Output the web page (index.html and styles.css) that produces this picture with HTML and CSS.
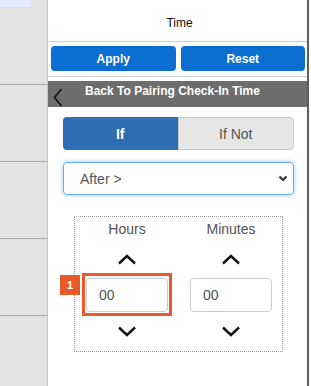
FILE: index.html
```html
<!DOCTYPE html>
<html>
<head>
<meta charset="utf-8">
<link rel="stylesheet" href="styles.css">
</head>
<body>
<div class="page">
  <div class="side">
    <div class="side-row first"><div class="side-tag"></div></div>
    <div class="side-row"></div>
    <div class="side-row"></div>
    <div class="side-row"></div>
    <div class="side-row last"></div>
  </div>
  <div class="main">
    <div class="header">Time</div>
    <div class="actions">
      <button class="btn">Apply</button>
      <button class="btn">Reset</button>
    </div>
    <div class="backbar">
      <svg class="back-icon" width="10" height="19" viewBox="0 0 10 19"><polyline points="8.5,1 1.5,9.5 8.5,18" fill="none" stroke="#111" stroke-width="1.6"/></svg>
      <span class="back-text">Back To Pairing Check-In Time</span>
    </div>
    <div class="toggle">
      <div class="tg tg-on">If</div>
      <div class="tg tg-off">If Not</div>
    </div>
    <div class="select">
      <span>After &gt;</span>
      <svg width="10" height="7" viewBox="0 0 10 7"><polyline points="1.5,1.5 5,5 8.5,1.5" fill="none" stroke="#333" stroke-width="2.2"/></svg>
    </div>
    <div class="picker">
      <div class="col">
        <div class="lbl">Hours</div>
        <svg class="chev" width="20" height="11" viewBox="0 0 20 11"><polyline points="2,9.5 10,2 18,9.5" fill="none" stroke="#111" stroke-width="2.4"/></svg>
        <div class="field-wrap">
          <div class="field">00</div>
          <div class="hl"></div>
          <div class="badge">1</div>
        </div>
        <svg class="chev" width="20" height="11" viewBox="0 0 20 11"><polyline points="2,1.5 10,9 18,1.5" fill="none" stroke="#111" stroke-width="2.4"/></svg>
      </div>
      <div class="col">
        <div class="lbl">Minutes</div>
        <svg class="chev" width="20" height="11" viewBox="0 0 20 11"><polyline points="2,9.5 10,2 18,9.5" fill="none" stroke="#111" stroke-width="2.4"/></svg>
        <div class="field-wrap">
          <div class="field">00</div>
        </div>
        <svg class="chev" width="20" height="11" viewBox="0 0 20 11"><polyline points="2,1.5 10,9 18,1.5" fill="none" stroke="#111" stroke-width="2.4"/></svg>
      </div>
    </div>
  </div>
  <div class="edge"></div>
</div>
</body>
</html>
```
FILE: styles.css
```css
* { box-sizing: border-box; }
html, body { margin: 0; padding: 0; background: #fff; }
body { font-family: "Liberation Sans", Arial, sans-serif; }
.page { display: flex; width: 311px; height: 386px; overflow: hidden; }

.side { width: 48px; flex: none; background: #e3e3e3; border-right: 1px solid #c4c4c4; display: flex; flex-direction: column; }
.side-row { height: 77px; border-bottom: 1px solid #a8a8a8; flex: none; }
.side-row.first { height: 85px; }
.side-row.last { flex: 1; border-bottom: none; }
.side-tag { width: 31px; height: 7px; background: #e6ecff; }

.main { width: 259px; flex: none; display: flex; flex-direction: column; }
.edge { width: 2px; flex: none; background: #5e5e5e; margin-right: 2px; }

.header { height: 42px; border-bottom: 1px solid #cfcfcf; display: flex; align-items: center; justify-content: center; font-size: 12px; color: #111; padding-left: 4px; padding-top: 5px; }

.actions { display: flex; gap: 5px; padding: 4px 2px 5px 3px; border-bottom: 1px solid #cfcfcf; }
.btn { flex: 1; height: 25px; border: none; border-radius: 4px; background: #0b6fd2; color: #fff; font-family: "Liberation Sans", Arial, sans-serif; font-weight: bold; font-size: 12px; padding: 0; }

.backbar { margin-top: 4px; height: 26px; background: #6d6d6d; display: flex; align-items: flex-start; position: relative; }
.back-icon { margin: 7px 0 0 5px; flex: none; }
.back-text { color: #fff; font-weight: bold; font-size: 12px; margin: 3px 0 0 22px; white-space: nowrap; }

.toggle { display: flex; margin: 10px 13px 0 15px; height: 33px; }
.tg { flex: 1; display: flex; align-items: center; justify-content: center; font-size: 14px; }
.tg-on { background: #2f6db3; color: #fff; font-weight: bold; border-radius: 4px 0 0 4px; }
.tg-off { background: #e6e6e6; color: #555; border: 1px solid #c8c8c8; border-radius: 0 4px 4px 0; }

.select { margin: 12px 13px 0 15px; height: 33px; border: 1px solid #66afe9; border-radius: 4px; box-shadow: 0 0 4px rgba(102,175,233,0.7); display: flex; align-items: center; justify-content: space-between; padding: 0 5px 0 16px; font-size: 14px; color: #555; }

.picker { margin: 21px 0 0 26px; width: 209px; height: 136px; border: 1px dotted #9a9a9a; display: flex; gap: 22px; padding: 0 11px 0 11px; }
.col { width: 82px; display: flex; flex-direction: column; align-items: center; }
.lbl { font-size: 14px; color: #555; margin-top: 4px; line-height: 16px; }
.chev { margin-top: 17px; }
.chev + .field-wrap { margin-top: 13px; }
.field-wrap { position: relative; width: 82px; }
.field-wrap + .chev { margin-top: 14px; }
.field { height: 34px; border: 1px solid #cdcdcd; border-radius: 4px; font-size: 14px; color: #555; display: flex; align-items: center; padding-left: 12px; }
.hl { position: absolute; left: -4px; top: -5px; width: 90px; height: 43px; border: 3px solid #ea5a2c; }
.badge { position: absolute; left: -26px; top: -3px; width: 20px; height: 20px; background: #e85a2c; color: #fff; font-size: 11px; font-weight: bold; display: flex; align-items: center; justify-content: center; }
```
